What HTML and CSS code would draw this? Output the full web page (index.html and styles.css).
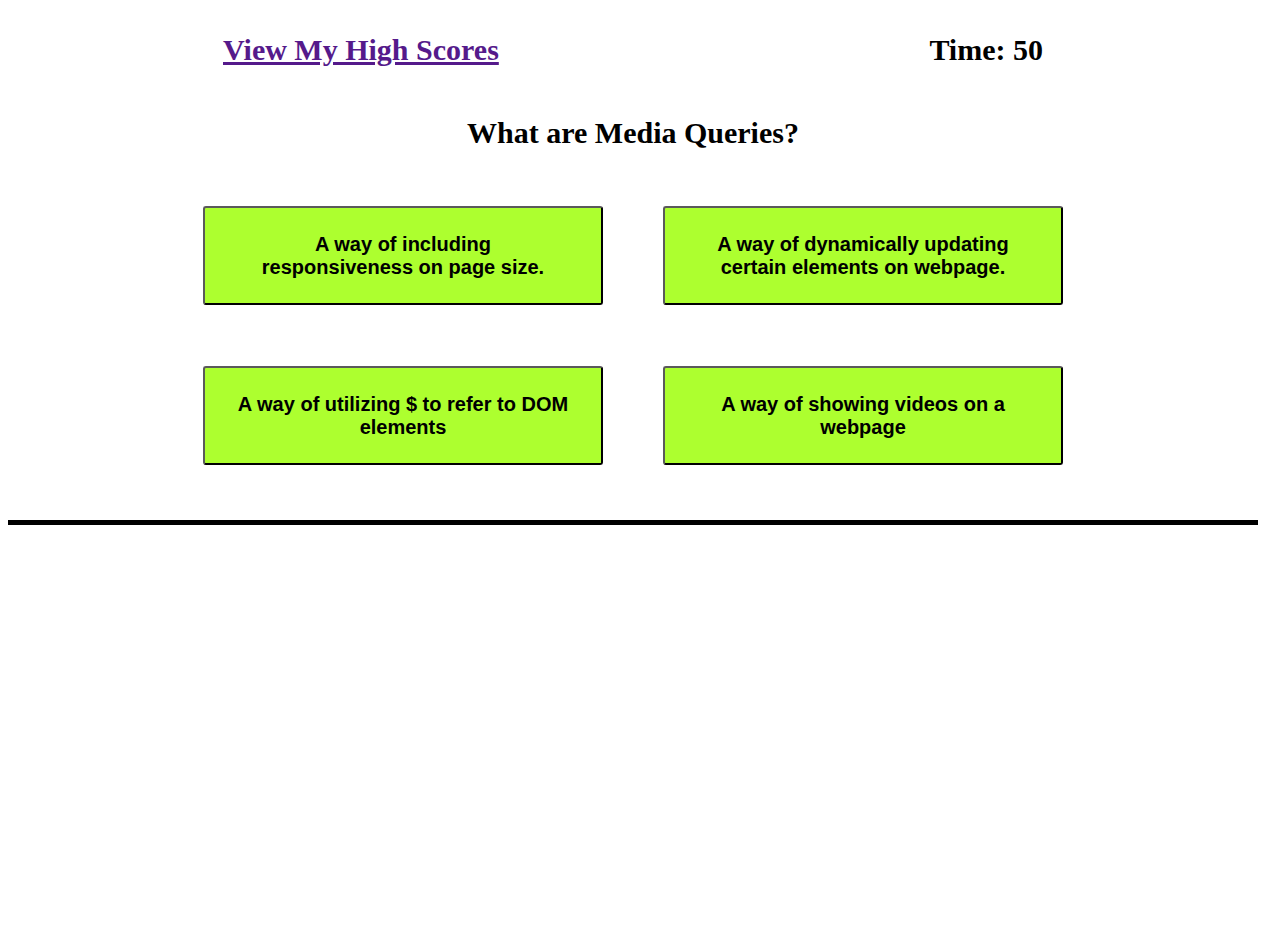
FILE: index.html
```html
<!DOCTYPE html>
<html>
<head>
  <link rel="stylesheet" href="styles.css">
</head>
<body>
  <div class="top-bar">
    <a href="#" class="scores-link">View My High Scores</a>
    <div class="timer">Time: <span id="timeLeft">50</span></div>
  </div>

  <h2 class="question">What are Media Queries?</h2>

  <div class="answers">
    <button class="answer-btn">A way of including responsiveness on page size.</button>
    <button class="answer-btn">A way of dynamically updating certain elements on webpage.</button>
    <button class="answer-btn">A way of utilizing $ to refer to DOM elements</button>
    <button class="answer-btn">A way of showing videos on a webpage</button>
  </div>

  <div class="divider"></div>
</body>
</html>
```

FILE: styles.css
```css
body {
  margin: 8px;
  font-family: "Liberation Serif", "Times New Roman", serif;
  color: #000;
  background: #fff;
}
.top-bar {
  display: flex;
  justify-content: space-between;
  padding: 25px 215px 0 215px;
  font-size: 30px;
  font-weight: bold;
}
.scores-link {
  color: #551a8b;
}
.question {
  margin: 49px 0 0 0;
  text-align: center;
  font-size: 30px;
  font-weight: bold;
}
.answers {
  display: grid;
  grid-template-columns: 400px 400px;
  justify-content: center;
  column-gap: 60px;
  row-gap: 61px;
  margin-top: 56px;
}
.answer-btn {
  background-color: #adff2f;
  border: 2px solid;
  border-color: #5a5a5a #000 #000 #5a5a5a;
  border-radius: 3px;
  padding: 25px 32.25px 24px 32.25px;
  font-family: "Liberation Sans", Arial, sans-serif;
  font-size: 20px;
  font-weight: bold;
  line-height: 23px;
  color: #000;
  text-align: center;
  cursor: pointer;
}
.divider {
  height: 5px;
  background: #000;
  margin-top: 55px;
}
```
